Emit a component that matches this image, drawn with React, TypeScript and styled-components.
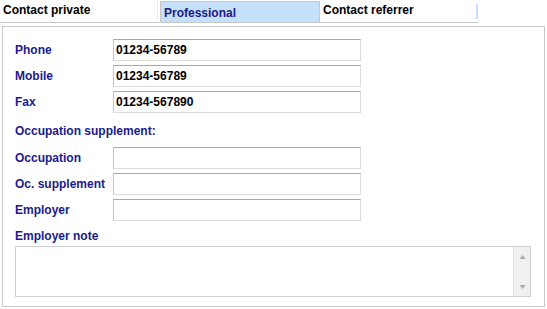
import React from 'react';
import styled, { createGlobalStyle } from 'styled-components';

const GlobalStyle = createGlobalStyle`
  body {
    margin: 0;
    background: #ffffff;
    font-family: 'Liberation Sans', Arial, sans-serif;
    font-size: 12px;
    font-weight: bold;
  }
`;

const phones = [
  { label: 'Phone', value: '01234-56789' },
  { label: 'Mobile', value: '01234-56789' },
  { label: 'Fax', value: '01234-567890' },
];

const occupation = ['Occupation', 'Oc. supplement', 'Employer'];

export default function App(): JSX.Element {
  return (
    <>
      <GlobalStyle />
      <TabBar>
        <Tab>Contact private</Tab>
        <ActiveTab>Professional</ActiveTab>
        <LastTab>Contact referrer</LastTab>
        <TabEnd />
      </TabBar>
      <Panel>
        <FieldGrid>
          {phones.map((p) => (
            <React.Fragment key={p.label}>
              <Label>{p.label}</Label>
              <Input defaultValue={p.value} />
            </React.Fragment>
          ))}
        </FieldGrid>
        <Heading>Occupation supplement:</Heading>
        <FieldGrid>
          {occupation.map((o) => (
            <React.Fragment key={o}>
              <Label>{o}</Label>
              <Input defaultValue="" />
            </React.Fragment>
          ))}
        </FieldGrid>
        <NoteHeading>Employer note</NoteHeading>
        <NoteBox>
          <Note />
          <ScrollBar>
            <Arrow>▲</Arrow>
            <Arrow>▼</Arrow>
          </ScrollBar>
        </NoteBox>
      </Panel>
    </>
  );
}

const TabBar = styled.div`
  display: flex;
  width: 478px;
  height: 22px;
  border-bottom: 1px solid #c8c8c8;
`;

const Tab = styled.div`
  box-sizing: border-box;
  width: 158px;
  height: 20px;
  margin-right: 2px;
  padding: 3px 0 0 3px;
  line-height: 14px;
  color: #000000;
  border-right: 1px solid #ececec;
`;

const ActiveTab = styled.div`
  box-sizing: border-box;
  width: 160px;
  height: 21px;
  margin-top: 1px;
  padding: 4px 0 0 3px;
  line-height: 14px;
  color: #1a1a8c;
  background: #c5e0fb;
  border: 1px solid #c8c8c8;
  border-bottom: none;
`;

const LastTab = styled.div`
  box-sizing: border-box;
  width: 156px;
  padding: 3px 0 0 3px;
  line-height: 14px;
  color: #000000;
`;

const TabEnd = styled.span`
  width: 2px;
  height: 15px;
  margin-top: 4px;
  background: #c5e0fb;
`;

const Panel = styled.div`
  box-sizing: border-box;
  width: 543px;
  height: 281px;
  margin: 3px 0 0 2px;
  padding: 12px 0 0 12px;
  border: 1px solid #c8c8c8;
`;

const FieldGrid = styled.div`
  display: grid;
  grid-template-columns: 98px 248px;
  grid-auto-rows: 22px;
  row-gap: 4px;
  align-items: center;
`;

const Label = styled.div`
  color: #1a1a8c;
  line-height: 14px;
  white-space: nowrap;
`;

const Input = styled.input`
  box-sizing: border-box;
  width: 248px;
  height: 22px;
  margin: 0;
  padding: 0 0 0 2px;
  font-family: 'Liberation Sans', Arial, sans-serif;
  font-size: 12px;
  font-weight: bold;
  color: #000000;
  background: #ffffff;
  border: 1px solid #dcdcdc;
  border-top-color: #a8a8a8;
  border-left-color: #c4c4c4;
  outline: none;
`;

const Heading = styled.div`
  color: #1a1a8c;
  line-height: 14px;
  margin: 11px 0 9px;
`;

const NoteHeading = styled(Heading)`
  margin: 8px 0 3px;
`;

const NoteBox = styled.div`
  box-sizing: border-box;
  display: flex;
  width: 516px;
  height: 51px;
  border: 1px solid #d0d0d0;
`;

const Note = styled.textarea`
  flex: 1;
  margin: 0;
  padding: 2px;
  border: none;
  outline: none;
  resize: none;
  font-family: 'Liberation Sans', Arial, sans-serif;
  font-size: 12px;
`;

const ScrollBar = styled.div`
  width: 16px;
  display: flex;
  flex-direction: column;
  justify-content: space-between;
  align-items: center;
  padding: 6px 0 5px;
  background: #f0f0f0;
  border-left: 1px solid #e2e2e2;
`;

const Arrow = styled.span`
  font-size: 7px;
  line-height: 8px;
  color: #a8a8a8;
  transform: scaleX(1.3);
`;
